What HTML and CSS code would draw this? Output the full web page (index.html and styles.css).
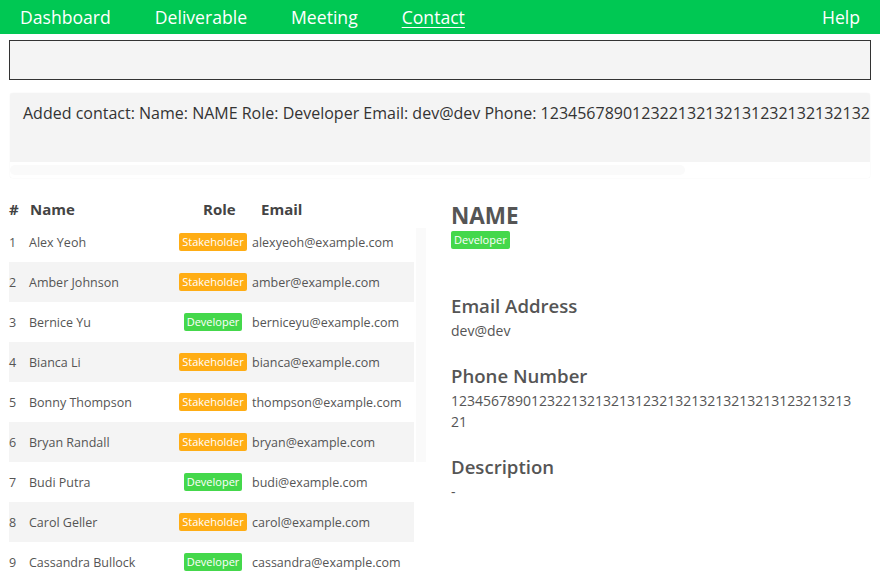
FILE: index.html
```html
<!DOCTYPE html>
<html>
<head>
<meta charset="utf-8">
<link rel="stylesheet" href="styles.css">
</head>
<body>
<nav class="nav">
  <a class="nav-link">Dashboard</a>
  <a class="nav-link">Deliverable</a>
  <a class="nav-link">Meeting</a>
  <a class="nav-link active">Contact</a>
  <a class="nav-link help">Help</a>
</nav>
<div class="command"></div>
<div class="result">
  <div class="result-text">Added contact: Name: NAME Role: Developer Email: dev@dev Phone: 12345678901232213213213123213213213213213123213213 21 Description: -</div>
  <div class="hscroll"><div class="hthumb"></div></div>
</div>
<div class="main">
  <div class="list">
    <div class="row head">
      <div class="c-num">#</div>
      <div class="c-name">Name</div>
      <div class="c-role">Role</div>
      <div class="c-email">Email</div>
    </div>
    <div class="rows">
      <div class="row"><div class="c-num">1</div><div class="c-name">Alex Yeoh</div><div class="c-role"><span class="badge stake">Stakeholder</span></div><div class="c-email">alexyeoh@example.com</div></div>
      <div class="row alt"><div class="c-num">2</div><div class="c-name">Amber Johnson</div><div class="c-role"><span class="badge stake">Stakeholder</span></div><div class="c-email">amber@example.com</div></div>
      <div class="row"><div class="c-num">3</div><div class="c-name">Bernice Yu</div><div class="c-role"><span class="badge dev">Developer</span></div><div class="c-email">berniceyu@example.com</div></div>
      <div class="row alt"><div class="c-num">4</div><div class="c-name">Bianca Li</div><div class="c-role"><span class="badge stake">Stakeholder</span></div><div class="c-email">bianca@example.com</div></div>
      <div class="row"><div class="c-num">5</div><div class="c-name">Bonny Thompson</div><div class="c-role"><span class="badge stake">Stakeholder</span></div><div class="c-email">thompson@example.com</div></div>
      <div class="row alt"><div class="c-num">6</div><div class="c-name">Bryan Randall</div><div class="c-role"><span class="badge stake">Stakeholder</span></div><div class="c-email">bryan@example.com</div></div>
      <div class="row"><div class="c-num">7</div><div class="c-name">Budi Putra</div><div class="c-role"><span class="badge dev">Developer</span></div><div class="c-email">budi@example.com</div></div>
      <div class="row alt"><div class="c-num">8</div><div class="c-name">Carol Geller</div><div class="c-role"><span class="badge stake">Stakeholder</span></div><div class="c-email">carol@example.com</div></div>
      <div class="row"><div class="c-num">9</div><div class="c-name">Cassandra Bullock</div><div class="c-role"><span class="badge dev">Developer</span></div><div class="c-email">cassandra@example.com</div></div>
    </div>
    <div class="vscroll"></div>
  </div>
  <div class="detail">
    <div class="d-name">NAME</div>
    <span class="badge dev">Developer</span>
    <div class="d-label first">Email Address</div>
    <div class="d-value">dev@dev</div>
    <div class="d-label">Phone Number</div>
    <div class="d-value phone">1234567890123221321321312321321321321321312321321321</div>
    <div class="d-label">Description</div>
    <div class="d-value">-</div>
  </div>
</div>
</body>
</html>
```
FILE: styles.css
```css
html, body {
  margin: 0;
  padding: 0;
  background: #fff;
  font-family: "Open Sans", "Noto Sans", sans-serif;
  color: #555;
  overflow: hidden;
}

.nav {
  height: 34px;
  background: #00c853;
  display: flex;
  align-items: center;
  padding-left: 20px;
  padding-right: 20px;
}
.nav-link {
  color: #fff;
  font-size: 17.6px;
  margin-right: 44px;
  line-height: 34px;
}
.nav-link.active {
  text-decoration: underline;
  text-decoration-thickness: 1px;
  text-underline-offset: 3px;
}
.nav-link.help {
  margin-left: auto;
  margin-right: 0;
}

.command {
  margin: 6px 9px 0 9px;
  height: 38px;
  border: 1px solid #333;
  background: #f4f4f4;
}

.result {
  margin: 13px 10px 0 10px;
  height: 85px;
  background: #fff;
  border-radius: 3px;
  display: flex;
  flex-direction: column;
  overflow: hidden;
  box-shadow: 0 0 1px rgba(0,0,0,0.12);
}
.result-text {
  flex: 1;
  background: #f4f4f4;
  padding: 9px 0 0 13px;
  font-size: 16px;
  color: #333;
  white-space: nowrap;
  overflow: hidden;
}
.hscroll {
  height: 16px;
  background: #fff;
  display: flex;
  align-items: center;
}
.hthumb {
  width: 675px;
  height: 10px;
  background: #fafafa;
  border-radius: 5px;
}

.main {
  display: flex;
  margin-top: 22px;
}
.list {
  position: relative;
  width: 405px;
  margin-left: 9px;
}
.vscroll {
  position: absolute;
  left: 407px;
  top: 28px;
  width: 10px;
  height: 234px;
  background: #fafafa;
}
.row {
  display: flex;
  align-items: center;
  height: 40px;
  font-size: 12.5px;
  color: #555;
}
.row.alt {
  background: #f4f4f4;
}
.row.head {
  height: 19px;
  padding-bottom: 3px;
  align-items: flex-end;
  font-size: 15px;
  font-weight: 700;
  color: #444;
}
.c-num {
  width: 20px;
}
.c-name {
  width: 147px;
}
.c-role {
  width: 74px;
  display: flex;
  justify-content: center;
}
.head .c-num { width: 21px; }
.head .c-name { width: 173px; }
.head .c-role { width: 58px; justify-content: flex-start; }
.c-email {
  padding-left: 2px;
}
.head .c-email { padding-left: 0; }

.badge {
  display: inline-block;
  color: #fff;
  font-size: 11px;
  line-height: 18px;
  padding: 0 3px;
  border-radius: 2px;
}
.badge.stake { background: #ffad14; }
.badge.dev { background: #44d84b; }

.detail {
  margin-left: 37px;
  width: 405px;
  display: flex;
  flex-direction: column;
  align-items: flex-start;
}
.d-name {
  font-size: 22.5px;
  font-weight: 700;
  color: #555;
  line-height: 30px;
  margin-bottom: 0;
  margin-top: 1px;
}
.d-label {
  font-size: 18.6px;
  font-weight: 600;
  color: #555;
  line-height: 26px;
  margin-top: 22px;
}
.d-label.first {
  margin-top: 44px;
}
.d-value {
  font-size: 14px;
  color: #555;
  line-height: 21px;
  margin-top: 1px;
}
.d-value.phone {
  width: 402px;
  word-break: break-all;
}
```
